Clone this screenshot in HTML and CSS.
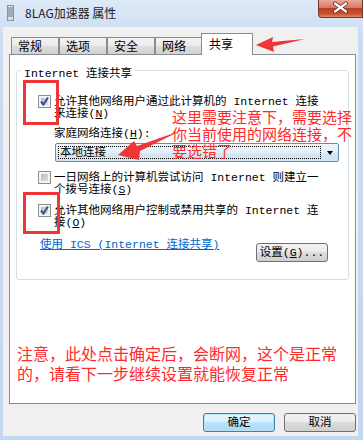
FILE: index.html
```html
<!DOCTYPE html>
<html lang="zh-CN">

<head>
    <meta charset="UTF-8">
    <meta name="viewport" content="width=device-width, initial-scale=1.0">
    <title>8LAG加速器 属性</title>
    <link rel="stylesheet" href="styles.css">
</head>

<body>
    <div class="window">
        <div class="titlebar">
            <svg class="app-icon" width="7" height="16" viewBox="0 0 7 16">
                <rect x="0.5" y="0.5" width="6" height="15" fill="#d8dde4" stroke="#8a939e" />
                <path d="M1 3h5M1 5h5M1 7h5M1 9h5M1 11h5" stroke="#6f7a88" stroke-width="1" />
            </svg>
            <span class="title">8LAG加速器 属性</span>
            <div class="close-btn">
                <svg width="45" height="18" viewBox="0 0 45 18">
                    <path d="M17 4.5 L28 12.5 M28 4.5 L17 12.5" stroke="#5a2a22" stroke-width="4" stroke-linecap="round" />
                    <path d="M17 4.5 L28 12.5 M28 4.5 L17 12.5" stroke="#ffffff" stroke-width="2.2" stroke-linecap="round" />
                </svg>
            </div>
        </div>

        <div class="client">
            <div class="tabs">
                <div class="tab">常规</div>
                <div class="tab">选项</div>
                <div class="tab">安全</div>
                <div class="tab">网络</div>
                <div class="tab active">共享</div>
            </div>

            <div class="panel">
                <div class="group">
                    <span class="group-title">Internet 连接共享</span>

                    <div class="check-row first">
                        <span class="checkbox checked">
                            <svg width="11" height="11" viewBox="0 0 11 11">
                                <path d="M2 5.5 L4.5 8.5 L9 1.5" fill="none" stroke="#3d4f8c" stroke-width="2" />
                            </svg>
                        </span>
                        <span class="check-label">允许其他网络用户通过此计算机的 Internet 连接<br>来连接(<u>N</u>)</span>
                    </div>

                    <div class="field-label">家庭网络连接(<u>H</u>):</div>
                    <div class="select">
                        <span class="select-text">本地连接</span>
                        <span class="select-arrow"></span>
                    </div>

                    <div class="check-row second">
                        <span class="checkbox"></span>
                        <span class="check-label">一日网络上的计算机尝试访问 Internet 则建立一<br>个拨号连接(<u>S</u>)</span>
                    </div>

                    <div class="check-row third">
                        <span class="checkbox checked">
                            <svg width="11" height="11" viewBox="0 0 11 11">
                                <path d="M2 5.5 L4.5 8.5 L9 1.5" fill="none" stroke="#3d4f8c" stroke-width="2" />
                            </svg>
                        </span>
                        <span class="check-label">允许其他网络用户控制或禁用共享的 Internet 连<br>接(<u>O</u>)</span>
                    </div>

                    <div class="link-row">
                        <a href="#" class="link">使用 ICS (Internet 连接共享)</a>
                        <button type="button" class="btn settings">设置(<u>G</u>)...</button>
                    </div>
                </div>

                <p class="note">注意，此处点击确定后，会断网，这个是正常<br>的，请看下一步继续设置就能恢复正常</p>
            </div>

            <div class="actions">
                <button type="button" class="btn default">确定</button>
                <button type="button" class="btn">取消</button>
            </div>
        </div>
    </div>

    <!-- red marks drawn over the screenshot -->
    <div class="annotations">
        <svg width="363" height="440" viewBox="0 0 363 440">
            <rect x="24.5" y="81.5" width="33" height="42" fill="none" stroke="#f03535" stroke-width="3" />
            <rect x="24.5" y="193.5" width="34" height="39" fill="none" stroke="#f03535" stroke-width="3" />
            <polygon points="256,45 273,37 272,42 305,39 273,46.5 274,52" fill="#f03535" />
            <polygon points="118,155 134,141 137,146 180,131 140,151 139,160" fill="#f03535" />
        </svg>
        <div class="hint">这里需要注意下，需要选择<br>你当前使用的网络连接，不<br>要选错了</div>
    </div>
</body>

</html>
```

FILE: styles.css
```css
* {
    margin: 0;
    padding: 0;
    box-sizing: border-box;
}

body {
    position: relative;
    width: 363px;
    height: 440px;
    overflow: hidden;
    font-family: "Liberation Mono", "Noto Sans CJK SC", monospace;
    font-size: 11.5px;
    color: #000;
}

.window {
    height: 440px;
    display: flex;
    flex-direction: column;
    background: linear-gradient(#dde9f7, #cbdcf0 40px, #c3d7ee);
}

/* title bar */
.titlebar {
    height: 27px;
    display: flex;
    align-items: flex-start;
    padding-left: 7px;
}

.app-icon {
    margin-top: 5px;
    flex: none;
}

.title {
    margin: 6px 0 0 11px;
    font-family: "Noto Sans CJK SC", sans-serif;
    font-size: 12px;
    line-height: 14px;
    color: #1b1b1b;
}

.close-btn {
    margin-left: auto;
    width: 45px;
    height: 18px;
    border: 1px solid #7a3428;
    border-top: none;
    border-radius: 0 0 0 4px;
    background: linear-gradient(#e9a99a, #d47a64 45%, #bf3c22 50%, #c8502f 80%, #e0866a);
}

.close-btn svg {
    display: block;
    margin: -1px 0 0 -1px;
}

/* client area */
.client {
    flex: 1;
    margin: 0 5px 4px 3px;
    padding: 6px 2px 0 6px;
    background: #f0f0f0;
    display: flex;
    flex-direction: column;
}

.tabs {
    height: 21px;
    display: flex;
    align-items: flex-end;
    padding-left: 2px;
}

.tab {
    width: 48px;
    height: 17px;
    padding-left: 6px;
    border: 1px solid #898c95;
    border-bottom: none;
    background: linear-gradient(#f3f3f3, #ebebeb 50%, #dedede 50%, #d2d2d2);
    font-family: "Noto Sans CJK SC", sans-serif;
    font-size: 12px;
    line-height: 15px;
}

.tab.active {
    position: relative;
    z-index: 1;
    width: 52px;
    height: 22px;
    margin-left: -2px;
    margin-bottom: -1px;
    padding-left: 7px;
    background: #fff;
    line-height: 20px;
}

.panel {
    height: 350px;
    background: #fff;
    border: 1px solid #898c95;
    display: flex;
    flex-direction: column;
}

.group {
    height: 210px;
    margin: 15px 6px 0;
    border: 1px solid #d5dfe5;
    border-radius: 3px;
    display: flex;
    flex-direction: column;
}

.group-title {
    align-self: flex-start;
    margin: -3px 0 0 4px;
    padding: 0 3px;
    background: #fff;
    line-height: 12px;
}

.check-row {
    display: flex;
    align-items: flex-start;
    padding-left: 21px;
}

.check-row.first {
    margin-top: 15px;
}

.check-row.second {
    margin-top: 9px;
}

.check-row.third {
    margin-top: 8px;
}

.checkbox {
    flex: none;
    width: 13px;
    height: 13px;
    border: 1px solid #8e8f8f;
    background: linear-gradient(135deg, #aeb3b9, #e9e9ea);
    box-shadow: inset 0 0 0 2px #f4f4f4;
}

.checkbox svg {
    display: block;
}

.check-label {
    margin-left: 3px;
    padding-top: 1px;
    line-height: 12px;
    white-space: nowrap;
}

.field-label {
    margin: 8px 0 0 37px;
    line-height: 12px;
}

.select {
    width: 284px;
    height: 19px;
    margin: 3px 0 0 38px;
    display: flex;
    align-items: center;
    border: 1px solid #5b8fbf;
    border-radius: 2px;
    background: linear-gradient(#f1f7fc, #e3eef8 50%, #d6e7f6 50%, #d0e3f4);
}

.select-text {
    flex: 1;
    height: 13px;
    margin-left: 2px;
    padding-left: 1px;
    border: 1px dotted #000;
    line-height: 11px;
}

.select-arrow {
    width: 0;
    height: 0;
    margin: 0 5px 0 6px;
    border-top: 4px solid #000;
    border-left: 3.5px solid transparent;
    border-right: 3.5px solid transparent;
}

.link-row {
    margin-top: 10px;
    display: flex;
    align-items: flex-start;
    padding: 0 20px 0 23px;
}

.link {
    color: #0066cc;
    line-height: 12px;
}

.btn {
    width: 72px;
    height: 19px;
    border: 1px solid #707070;
    border-radius: 3px;
    background: linear-gradient(#f2f2f2, #ebebeb 45%, #dddddd 50%, #cfcfcf);
    font-family: "Liberation Mono", "Noto Sans CJK SC", monospace;
    font-size: 11.5px;
    line-height: 17px;
    color: #000;
}

.btn.settings {
    margin: 4px 0 0 auto;
}

.btn.default {
    border-color: #3c7fb1;
    background: linear-gradient(#eaf6fd, #d9f0fc 45%, #bee6fd 50%, #a7d9f5);
    box-shadow: inset 0 0 0 1px #b9e2f8;
}

.note {
    margin: 63px 0 0 7px;
    font-family: "Noto Sans CJK SC", sans-serif;
    font-size: 16px;
    line-height: 20px;
    color: #ff2a2a;
}

.actions {
    margin-top: 9px;
    display: flex;
    justify-content: flex-end;
    gap: 9px;
}

/* annotations */
.annotations {
    position: absolute;
    left: 0;
    top: 0;
    width: 363px;
    height: 440px;
    pointer-events: none;
}

.annotations svg {
    display: block;
}

.hint {
    position: absolute;
    left: 172px;
    top: 108px;
    font-family: "Noto Sans CJK SC", sans-serif;
    font-size: 15px;
    line-height: 17px;
    color: #ff2a2a;
    white-space: nowrap;
}
```
